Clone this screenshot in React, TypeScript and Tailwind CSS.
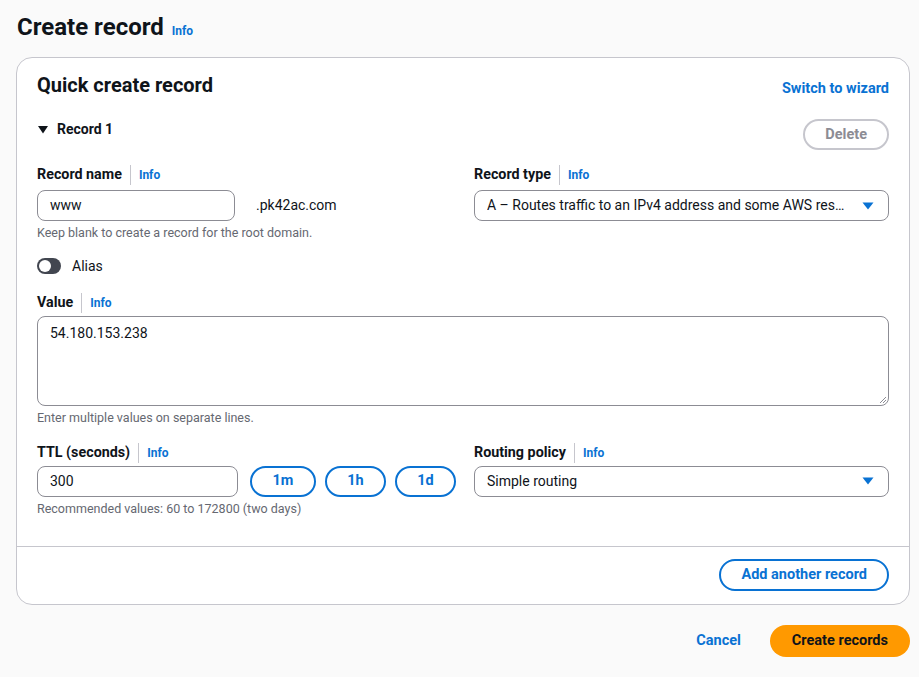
import React from 'react';

const font = { fontFamily: 'Roboto, "Open Sans", Arial, sans-serif' };

function Info() {
  return <span className="text-[12px] font-bold text-[#0972d3]">Info</span>;
}

function Label({ text }: { text: string }) {
  return (
    <div className="flex h-[22px] items-center">
      <span className="text-[14.3px] font-bold text-[#0f141a]">{text}</span>
      <span className="mx-[8px] h-[20px] w-px bg-[#c6c6cd]" />
      <Info />
    </div>
  );
}

function Caret() {
  return (
    <svg width="12" height="8" viewBox="0 0 12 8">
      <path d="M0.5 0.5 L11.5 0.5 L6 7.5 Z" fill="#0972d3" />
    </svg>
  );
}

function Select({ value }: { value: string }) {
  return (
    <div className="flex h-[31px] items-center justify-between rounded-[8px] border border-[#8c8c94] bg-white pl-[12px] pr-[14px]">
      <span className="truncate text-[14px] text-[#0f141a]">{value}</span>
      <Caret />
    </div>
  );
}

export default function App() {
  return (
    <div className="min-h-screen bg-[#fafafa] pt-[9px] pr-[9px] pl-[16px]" style={font}>
      <div className="flex items-baseline gap-[8px] pl-px">
        <h1 className="text-[24px] font-bold text-[#0f141a]">Create record</h1>
        <Info />
      </div>

      <div className="mt-[12px] rounded-[16px] border border-[#c6c6cd] bg-white">
        <div className="px-[20px] pt-[12px] pb-[28px]">
          <div className="flex items-start justify-between">
            <h2 className="text-[20px] font-bold text-[#0f141a]">Quick create record</h2>
            <span className="mt-[8px] text-[14.5px] font-bold text-[#0972d3]">Switch to wizard</span>
          </div>

          <div className="mt-[17px] flex items-start justify-between">
            <div className="mt-[2px] flex items-center gap-[9px] pl-[1px]">
              <svg width="10" height="8" viewBox="0 0 10 8">
                <path d="M0 0 L10 0 L5 7.5 Z" fill="#0f141a" />
              </svg>
              <span className="text-[14px] font-bold text-[#0f141a]">Record 1</span>
            </div>
            <div className="mt-[2px] flex h-[31px] items-center rounded-full border-2 border-[#c6c6cd] px-[20px] text-[14.5px] font-bold text-[#8c8c94]">
              Delete
            </div>
          </div>

          <div className="mt-[14px] grid grid-cols-2 gap-x-[22px]">
            <div>
              <Label text="Record name" />
              <div className="mt-[4px] flex items-center">
                <div className="flex h-[31px] w-[198px] items-center rounded-[8px] border border-[#8c8c94] px-[12px] text-[14px] text-[#0f141a]">
                  www
                </div>
                <span className="ml-[21px] text-[14px] text-[#0f141a]">.pk42ac.com</span>
              </div>
              <div className="mt-[3px] text-[12.5px] text-[#656871]">Keep blank to create a record for the root domain.</div>
            </div>
            <div>
              <Label text="Record type" />
              <div className="mt-[4px]">
                <Select value="A – Routes traffic to an IPv4 address and some AWS res…" />
              </div>
            </div>
          </div>

          <div className="mt-[13px] flex items-center gap-[11px]">
            <span className="flex h-[16px] w-[24px] items-center rounded-full bg-[#424650] px-[2px]">
              <span className="h-[12px] w-[12px] rounded-full bg-white" />
            </span>
            <span className="text-[14px] text-[#0f141a]">Alias</span>
          </div>

          <div className="mt-[15px]">
            <Label text="Value" />
            <div className="relative mt-[2px] h-[90px] rounded-[8px] border border-[#8c8c94] px-[12px] pt-[6px] text-[14px] text-[#0f141a]">
              54.180.153.238
              <svg className="absolute right-[1px] bottom-[1px]" width="8" height="8" viewBox="0 0 8 8">
                <path d="M7 1 L1 7 M7 4 L4 7" stroke="#8c8c94" strokeWidth="1" />
              </svg>
            </div>
            <div className="mt-[3px] text-[12.5px] text-[#656871]">Enter multiple values on separate lines.</div>
          </div>

          <div className="mt-[14px] grid grid-cols-2 gap-x-[22px]">
            <div>
              <Label text="TTL (seconds)" />
              <div className="mt-[2px] flex items-center">
                <div className="flex h-[31px] w-[201px] shrink-0 items-center rounded-[8px] border border-[#8c8c94] px-[12px] text-[14px] text-[#0f141a]">
                  300
                </div>
                <div className="ml-[12px] flex gap-[9px]">
                  {['1m', '1h', '1d'].map((t, i) => (
                    <div
                      key={t}
                      className={`flex h-[31px] items-center justify-center rounded-full border-2 border-[#0972d3] text-[14.5px] font-bold text-[#0972d3] ${
                        i === 0 ? 'w-[66px]' : 'w-[61px]'
                      }`}
                    >
                      {t}
                    </div>
                  ))}
                </div>
              </div>
              <div className="mt-[3px] text-[12.5px] text-[#656871]">Recommended values: 60 to 172800 (two days)</div>
            </div>
            <div>
              <Label text="Routing policy" />
              <div className="mt-[2px]">
                <Select value="Simple routing" />
              </div>
            </div>
          </div>
        </div>

        <div className="flex justify-end border-t border-[#c6c6cd] px-[20px] pt-[12px] pb-[13px]">
          <div className="flex h-[32px] items-center rounded-full border-2 border-[#0972d3] px-[20px] text-[14.5px] font-bold text-[#0972d3]">
            Add another record
          </div>
        </div>
      </div>

      <div className="mt-[20px] flex items-center justify-end gap-[29px]">
        <span className="text-[14.5px] font-bold text-[#0972d3]">Cancel</span>
        <div className="flex h-[32px] items-center rounded-full bg-[#ff9900] px-[22px] text-[14.5px] font-bold text-[#0f141a]">
          Create records
        </div>
      </div>
    </div>
  );
}
